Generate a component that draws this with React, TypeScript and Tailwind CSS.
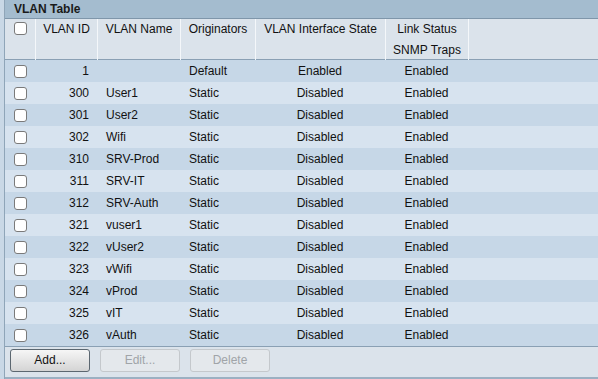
const rows = [
  { id: 1, name: "", orig: "Default", state: "Enabled", link: "Enabled" },
  { id: 300, name: "User1", orig: "Static", state: "Disabled", link: "Enabled" },
  { id: 301, name: "User2", orig: "Static", state: "Disabled", link: "Enabled" },
  { id: 302, name: "Wifi", orig: "Static", state: "Disabled", link: "Enabled" },
  { id: 310, name: "SRV-Prod", orig: "Static", state: "Disabled", link: "Enabled" },
  { id: 311, name: "SRV-IT", orig: "Static", state: "Disabled", link: "Enabled" },
  { id: 312, name: "SRV-Auth", orig: "Static", state: "Disabled", link: "Enabled" },
  { id: 321, name: "vuser1", orig: "Static", state: "Disabled", link: "Enabled" },
  { id: 322, name: "vUser2", orig: "Static", state: "Disabled", link: "Enabled" },
  { id: 323, name: "vWifi", orig: "Static", state: "Disabled", link: "Enabled" },
  { id: 324, name: "vProd", orig: "Static", state: "Disabled", link: "Enabled" },
  { id: 325, name: "vIT", orig: "Static", state: "Disabled", link: "Enabled" },
  { id: 326, name: "vAuth", orig: "Static", state: "Disabled", link: "Enabled" },
];

const Box = () => (
  <span className="block w-[13px] h-[13px] rounded-[3px] border border-[#7a7a7a] bg-white" />
);

export default function App() {
  return (
    <div className="w-[598px] h-[379px] bg-[#c9d8e6] pl-[4px] font-['Liberation_Sans',Arial,sans-serif] text-[12px] text-[#111]">
      <div className="h-full border-l border-[#8fa5b8] flex flex-col">
        <div className="h-[19px] bg-[#a4bccf] border-b border-[#7f96aa] pl-[9px] pt-[1px] font-bold leading-[17px] text-[#1a1a1a]">
          VLAN Table
        </div>

        <div className="grid grid-cols-[30px_62px_83px_75px_130px_83px_1fr] h-[41px] bg-[#dbe3eb] border-b border-[#8aa0b4]">
          <div className="flex justify-center pt-[3px] pl-[1px]"><Box /></div>
          <div className="border-l border-[#f4f7fa] text-center leading-[21px]">VLAN ID</div>
          <div className="border-l border-[#f4f7fa] text-center leading-[21px]">VLAN Name</div>
          <div className="border-l border-[#f4f7fa] text-center leading-[21px]">Originators</div>
          <div className="border-l border-[#f4f7fa] text-center leading-[21px]">VLAN Interface State</div>
          <div className="border-l border-[#f4f7fa] text-center leading-[21px]">Link Status<br />SNMP Traps</div>
          <div className="border-l border-[#f4f7fa]" />
        </div>

        {rows.map((r, i) => (
          <div
            key={r.id}
            className={
              "grid grid-cols-[30px_62px_83px_75px_130px_83px_1fr] h-[22px] items-center " +
              (i % 2 === 0 ? "bg-[#c6d7e7]" : "bg-[#d7e3ef]")
            }
          >
            <div className="flex justify-center pl-[1px]"><Box /></div>
            <div className="text-right pr-[8px]">{r.id}</div>
            <div className="pl-[9px]">{r.name}</div>
            <div className="pl-[9px]">{r.orig}</div>
            <div className="text-center">{r.state}</div>
            <div className="text-center">{r.link}</div>
            <div />
          </div>
        ))}

        <div className="flex-1 bg-[#dbe3eb] border-t border-[#8aa0b4] border-b-2 border-b-[#9bb0c2] flex items-start gap-[10px] pl-[5px] pt-[2px]">
          <button className="w-[80px] h-[23px] rounded-[3px] border border-[#5c6770] bg-gradient-to-b from-[#f6f6f6] to-[#d4d4d4] text-[#111] leading-[21px]">
            Add...
          </button>
          <button className="w-[80px] h-[23px] rounded-[3px] border border-[#c4c8cc] bg-[#e4e8ec] text-[#a0a4a8] leading-[21px]">
            Edit...
          </button>
          <button className="w-[80px] h-[23px] rounded-[3px] border border-[#c4c8cc] bg-[#e4e8ec] text-[#a0a4a8] leading-[21px]">
            Delete
          </button>
        </div>
      </div>
    </div>
  );
}
